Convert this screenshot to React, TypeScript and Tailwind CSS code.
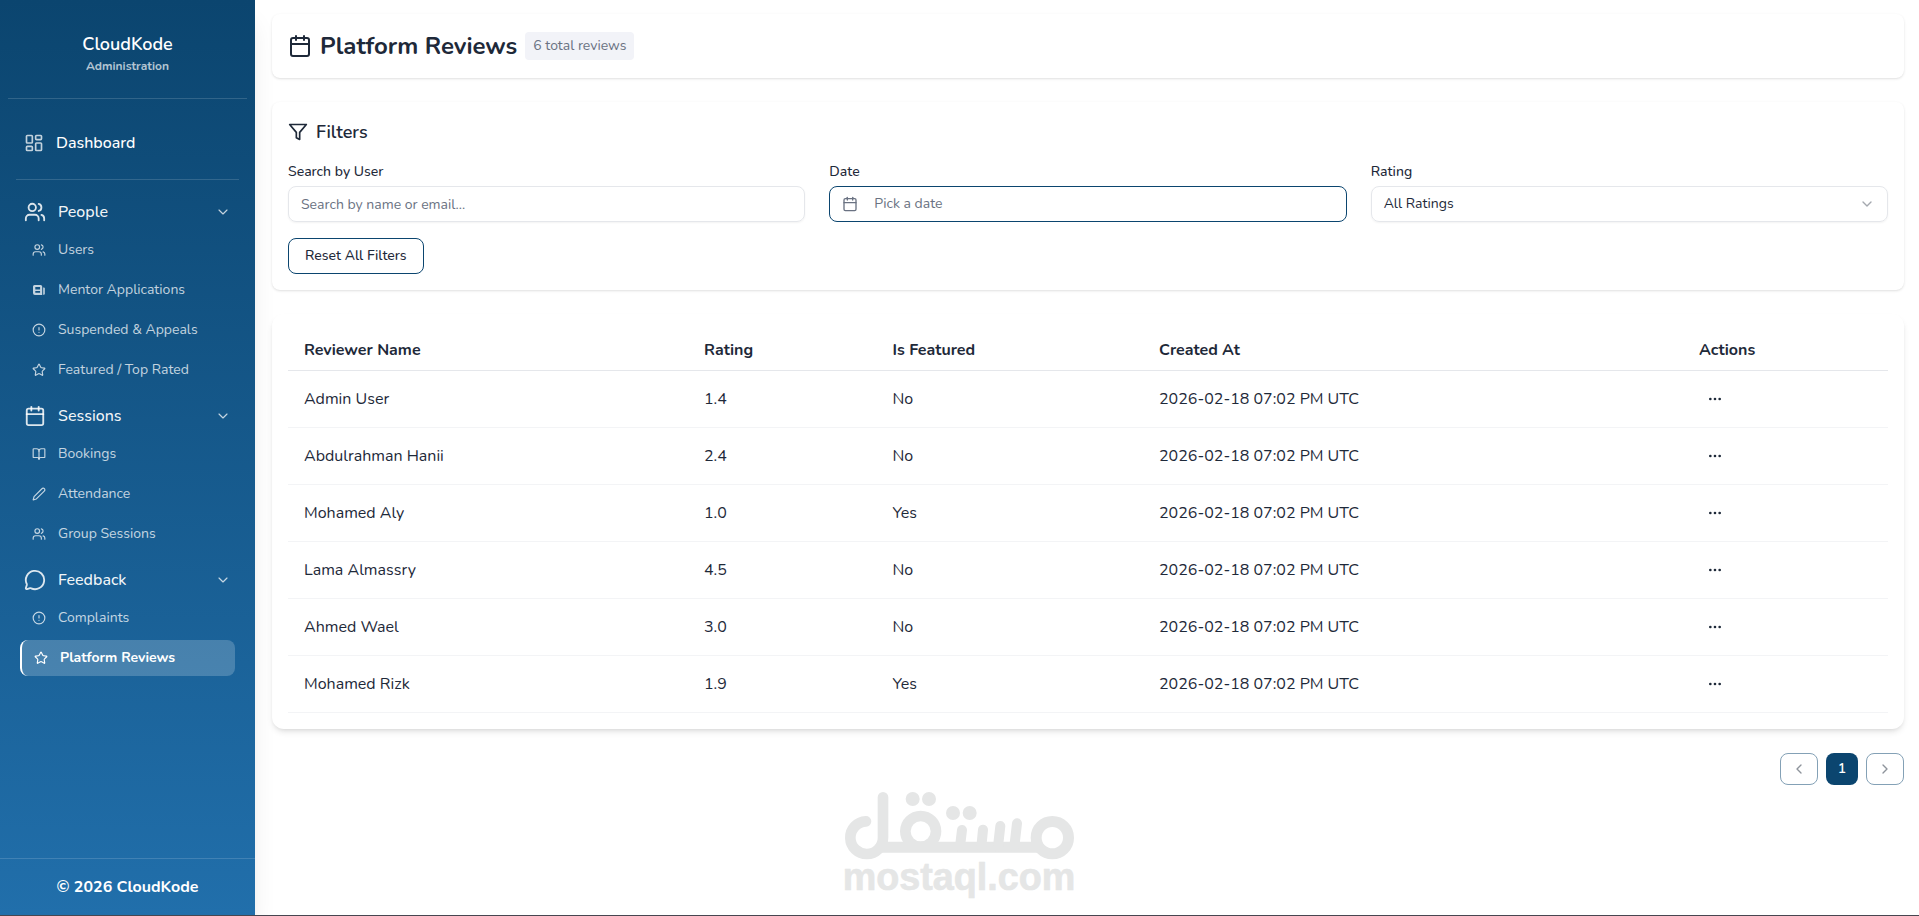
import type { ReactNode } from "react";
import {
  BookOpen,
  Calendar,
  ChevronDown,
  ChevronLeft,
  ChevronRight,
  CircleAlert,
  LayoutDashboard,
  MessageCircle,
  MoreHorizontal,
  Star,
  Users,
} from "lucide-react";

function NewspaperIcon({ className }: { className?: string }) {
  return (
    <svg viewBox="0 0 16 16" className={className} fill="currentColor">
      <path
        fillRule="evenodd"
        d="M3.6 3h6A1.6 1.6 0 0 1 11.2 4.6V13H4a2 2 0 0 1-2-2V4.6A1.6 1.6 0 0 1 3.6 3Zm.7 2v2.4h4.8V5Zm0 4.1v1.6h4.8V9.1Z"
      />
      <path d="M12.2 5.6h.6a1 1 0 0 1 1 1v5a1.2 1.2 0 0 1-1.6 1.1Z" />
    </svg>
  );
}

function PencilIcon({ className }: { className?: string }) {
  return (
    <svg
      viewBox="0 0 24 24"
      className={className}
      fill="none"
      stroke="currentColor"
      strokeWidth="2"
      strokeLinecap="round"
      strokeLinejoin="round"
    >
      <path d="M17 3a2.85 2.83 0 1 1 4 4L7.5 20.5 2 22l1.5-5.5Z" />
    </svg>
  );
}

function FunnelIcon({ className }: { className?: string }) {
  return (
    <svg
      viewBox="0 0 24 24"
      className={className}
      fill="none"
      stroke="currentColor"
      strokeWidth="2"
      strokeLinecap="round"
      strokeLinejoin="round"
    >
      <polygon points="22 3 2 3 10 12.46 10 19 14 21 14 12.46 22 3" />
    </svg>
  );
}

type NavItem = { label: string; icon: ReactNode; active?: boolean };
type NavGroup = { label: string; icon: ReactNode; items: NavItem[] };

const groups: NavGroup[] = [
  {
    label: "People",
    icon: <Users className="size-[22px]" />,
    items: [
      { label: "Users", icon: <Users className="size-3.5" /> },
      { label: "Mentor Applications", icon: <NewspaperIcon className="size-4 -mx-px" /> },
      { label: "Suspended & Appeals", icon: <CircleAlert className="size-3.5" /> },
      { label: "Featured / Top Rated", icon: <Star className="size-3.5" /> },
    ],
  },
  {
    label: "Sessions",
    icon: <Calendar className="size-[22px]" />,
    items: [
      { label: "Bookings", icon: <BookOpen className="size-3.5" /> },
      { label: "Attendance", icon: <PencilIcon className="size-3.5" /> },
      { label: "Group Sessions", icon: <Users className="size-3.5" /> },
    ],
  },
  {
    label: "Feedback",
    icon: <MessageCircle className="size-[22px]" />,
    items: [
      { label: "Complaints", icon: <CircleAlert className="size-3.5" /> },
      { label: "Platform Reviews", icon: <Star className="size-3.5" />, active: true },
    ],
  },
];

const reviews = [
  { name: "Admin User", rating: "1.4", featured: "No" },
  { name: "Abdulrahman Hanii", rating: "2.4", featured: "No" },
  { name: "Mohamed Aly", rating: "1.0", featured: "Yes" },
  { name: "Lama Almassry", rating: "4.5", featured: "No" },
  { name: "Ahmed Wael", rating: "3.0", featured: "No" },
  { name: "Mohamed Rizk", rating: "1.9", featured: "Yes" },
];

function Sidebar() {
  return (
    <aside className="z-10 flex w-[255px] shrink-0 flex-col bg-linear-to-b from-[#0b456f] to-[#216fab] text-white shadow-xl">
      <div className="mx-2 flex h-[99px] flex-col items-center border-b border-white/15 pt-[30px]">
        <div className="text-lg leading-7 font-semibold">CloudKode</div>
        <div className="text-xs leading-4 font-bold text-white/70">Administration</div>
      </div>
      <div className="mx-4 flex h-[81px] items-center border-b border-white/15 pt-2 pl-2">
        <LayoutDashboard className="size-5 text-white/75" />
        <span className="ml-3 text-base font-medium">Dashboard</span>
      </div>
      <nav className="flex flex-1 flex-col gap-2.5 px-5 pt-3.5">
        {groups.map((group) => (
          <div key={group.label}>
            <div className="flex h-9 items-center pr-1 pl-1">
              <span className="text-white/85">{group.icon}</span>
              <span className="ml-3 flex-1 text-base font-medium text-white/95">{group.label}</span>
              <ChevronDown strokeWidth={1.75} className="size-4 text-white/75" />
            </div>
            <div className="mt-0.5 flex flex-col gap-1">
              {group.items.map((item) =>
                item.active ? (
                  <div
                    key={item.label}
                    className="flex h-9 items-center gap-3 rounded-lg border-l-2 border-white bg-white/20 pl-3 text-sm font-bold"
                  >
                    {item.icon}
                    {item.label}
                  </div>
                ) : (
                  <div key={item.label} className="flex h-9 items-center gap-3 pl-3 text-sm text-white/75">
                    {item.icon}
                    {item.label}
                  </div>
                ),
              )}
            </div>
          </div>
        ))}
      </nav>
      <div className="flex h-[57px] items-center justify-center border-t border-white/15 text-base font-bold">
        © 2026 CloudKode
      </div>
    </aside>
  );
}

function Filters() {
  return (
    <section className="rounded-lg bg-white p-4 shadow-sm">
      <h2 className="flex items-center gap-2 text-lg leading-7 font-semibold">
        <FunnelIcon className="size-5" />
        Filters
      </h2>
      <div className="mt-4 grid grid-cols-3 gap-6 text-sm">
        <div>
          <label className="block font-medium">Search by User</label>
          <div className="mt-1 flex h-9 items-center rounded-lg border border-gray-200 px-3 pt-px text-gray-500 shadow-xs">
            Search by name or email...
          </div>
        </div>
        <div>
          <label className="block font-medium">Date</label>
          <div className="mt-1 flex h-9 items-center gap-4 rounded-lg border border-[#0b456f] px-3 text-gray-500">
            <Calendar className="size-4" />
            Pick a date
          </div>
        </div>
        <div>
          <label className="block font-medium">Rating</label>
          <div className="mt-1 flex h-9 items-center justify-between rounded-lg border border-gray-200 px-3 shadow-xs">
            All Ratings
            <ChevronDown className="size-4 opacity-40" />
          </div>
        </div>
      </div>
      <button className="mt-4 flex h-9 items-center rounded-lg border border-[#0b456f] px-4 text-sm font-medium">
        Reset All Filters
      </button>
    </section>
  );
}

function ReviewsTable() {
  return (
    <section className="rounded-xl bg-white p-4 shadow-md">
      <table className="w-full table-fixed text-left text-base">
        <colgroup>
          <col className="w-[400px]" />
          <col className="w-[188.5px]" />
          <col className="w-[266.5px]" />
          <col className="w-[540px]" />
          <col />
        </colgroup>
        <thead>
          <tr className="h-10 border-b border-gray-200">
            <th className="px-4 py-0 font-bold">Reviewer Name</th>
            <th className="px-4 py-0 font-bold">Rating</th>
            <th className="px-4 py-0 font-bold">Is Featured</th>
            <th className="px-4 py-0 font-bold">Created At</th>
            <th className="px-4 py-0 font-bold">Actions</th>
          </tr>
        </thead>
        <tbody>
          {reviews.map((review) => (
            <tr key={review.name} className="h-[57px] border-b border-gray-100">
              <td className="px-4 py-0">{review.name}</td>
              <td className="px-4 py-0">{review.rating}</td>
              <td className="px-4 py-0">{review.featured}</td>
              <td className="px-4 py-0">2026-02-18 07:02 PM UTC</td>
              <td className="px-6 py-0">
                <MoreHorizontal className="size-4" />
              </td>
            </tr>
          ))}
        </tbody>
      </table>
    </section>
  );
}

function Pagination() {
  return (
    <div className="flex h-8 justify-end gap-2 text-sm">
      <button className="flex w-[38px] items-center justify-center rounded-lg border border-[#0b456f] opacity-50">
        <ChevronLeft className="size-4" />
      </button>
      <button className="flex w-8 items-center justify-center rounded-lg bg-[#0b456f] font-semibold text-white">1</button>
      <button className="flex w-[38px] items-center justify-center rounded-lg border border-[#0b456f] opacity-50">
        <ChevronRight className="size-4" />
      </button>
    </div>
  );
}

function Watermark() {
  return (
    <svg
      viewBox="0 0 840 438"
      className="pointer-events-none absolute top-[770px] left-[820px] h-[146px] w-[280px]"
      fill="none"
      stroke="#e5e6e6"
      strokeLinecap="round"
    >
      <circle cx="697" cy="203" r="48.5" strokeWidth="33" />
      <circle cx="302" cy="184" r="46" strokeWidth="32" />
      <path d="M138 154A49 49 0 1 0 189 203V82" strokeWidth="32" />
      <path d="M180 232H662" strokeWidth="33" strokeLinecap="butt" />
      <path d="M426 180L420 230M489 179L484 230M541 168L534 230M591 160L583 230" strokeWidth="30" />
      <g fill="#e5e6e6" stroke="none">
        <circle cx="278" cy="87" r="21" />
        <circle cx="327" cy="87" r="21" />
        <circle cx="399" cy="129" r="21" />
        <circle cx="449" cy="129" r="21" />
      </g>
      <text
        x="68"
        y="359"
        textLength="698"
        lengthAdjust="spacingAndGlyphs"
        fill="#e5e6e6"
        strokeWidth="2"
        strokeLinejoin="round"
        className="font-['Liberation_Sans',sans-serif] text-[114px] font-bold"
      >
        mostaql.com
      </text>
    </svg>
  );
}

export default function App() {
  return (
    <div className="relative flex h-[916px] w-full overflow-hidden border-b border-[#474650] bg-white font-['Nunito','Lato',sans-serif] text-gray-800">
      <Sidebar />
      <main className="flex flex-1 flex-col gap-6 py-3.5 pr-[15px] pl-[17px]">
        <header className="flex h-16 items-center rounded-lg bg-white px-4 shadow-sm">
          <Calendar className="size-6" />
          <h1 className="ml-2 text-2xl font-bold">Platform Reviews</h1>
          <span className="ml-2 rounded bg-[#f2f3f8] px-2 py-1 text-sm text-gray-500">6 total reviews</span>
        </header>
        <Filters />
        <ReviewsTable />
        <Pagination />
      </main>
      <Watermark />
    </div>
  );
}
